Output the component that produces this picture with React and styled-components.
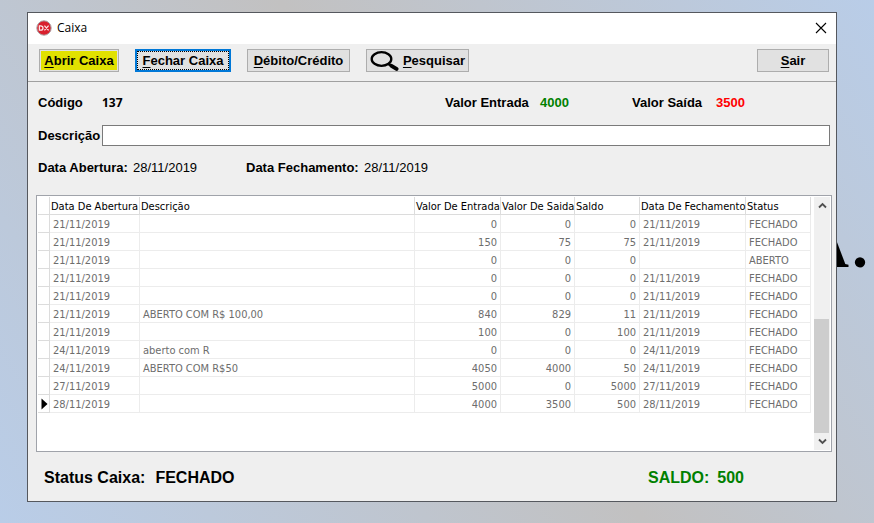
import React from "react";
import styled, { createGlobalStyle } from "styled-components";

const GlobalStyle = createGlobalStyle`
  * { box-sizing: border-box; }
  html, body, #root { min-height: 100vh; }
  body { margin: 0; font-family: "Liberation Sans", Arial, sans-serif; font-size: 13px; color: #000; }
`;

const Desktop = styled.div`
  position: relative;
  min-height: 100vh;
  padding: 12px 37px 21px 27px;
  overflow: hidden;
  background: linear-gradient(55deg, #b9cde8 0%, #c2c1c1 52%, #b9cde8 100%);
`;

const Wallpaper = styled.div`
  position: absolute;
  right: 6px;
  top: 210px;
  display: flex;
  gap: 3px;
  font: bold 64px/72px "Liberation Serif", "Times New Roman", serif;
`;

const Window = styled.main`
  position: relative;
  border: 1px solid #55585e;
  background: #efefef;
`;

const TitleBar = styled.header`
  display: flex;
  align-items: center;
  gap: 5px;
  height: 31px;
  padding: 0 9px 2px 8px;
  background: #fff;
`;

const Title = styled.h1`
  flex: 1;
  margin: 0;
  font: 12px/16px "Open Sans", "Noto Sans", sans-serif;
`;

const CloseButton = styled.button`
  display: flex;
  padding: 0;
  border: 0;
  background: none;
`;

const Toolbar = styled.nav`
  display: flex;
  align-items: center;
  gap: 16px;
  height: 38px;
  padding: 0 7px 5px 11px;
  border-bottom: 1px solid #a0a0a0;
`;

const ToolButton = styled.button`
  display: flex;
  align-items: center;
  justify-content: center;
  gap: 4px;
  width: ${(p) => p.$width}px;
  height: 23px;
  margin: 0;
  margin-left: ${(p) => (p.$push ? "auto" : "0")};
  padding: 2px 0 0;
  border: ${(p) => (p.$focused ? "2px solid #0078d7" : "1px solid #adadad")};
  outline: ${(p) => (p.$focused ? "1px dotted #000" : "none")};
  outline-offset: -3px;
  background: ${(p) => (p.$highlight ? "#e1e100" : "#e1e1e1")};
  box-shadow: ${(p) => (p.$highlight ? "inset 0 0 0 1px #e1e1e1" : "none")};
  color: #000;
  font: bold 13px/18px "Liberation Sans", Arial, sans-serif;
  white-space: nowrap;
`;

const AccessKey = styled.span`
  text-decoration: underline;
  text-underline-offset: 2px;
`;

const Form = styled.form`
  display: grid;
  gap: 12px;
  padding: 11px 6px 17px 10px;
`;

const FieldRow = styled.div`
  display: flex;
  align-items: center;
  min-height: 20px;
`;

const Label = styled.label`
  flex: none;
  width: ${(p) => (p.$width ? `${p.$width}px` : "auto")};
  font: bold 13px/18px "Liberation Sans", Arial, sans-serif;
`;

const Value = styled.output`
  width: ${(p) => (p.$width ? `${p.$width}px` : "auto")};
  color: ${(p) => p.$color || "#000"};
  font-size: 13px;
  font-weight: ${(p) => (p.$bold ? "bold" : "normal")};
  line-height: 18px;
`;

const Code = styled.output`
  flex: 1;
  font: bold 12px/18px "Noto Sans", sans-serif;
`;

const TextInput = styled.input`
  flex: 1;
  min-width: 0;
  height: 21px;
  padding: 0 4px;
  border: 1px solid #7a7a7a;
  background: #fff;
  font: 13px/18px "Liberation Sans", Arial, sans-serif;
`;

const GridPanel = styled.section`
  display: flex;
  gap: 3px;
  min-height: 257px;
  margin: 0 4px 0 8px;
  padding: 1px;
  border: 1px solid #a0a3aa;
  background: #fff;
`;

const GridArea = styled.div`
  flex: 1;
  min-width: 0;
`;

const Table = styled.table`
  width: 100%;
  table-layout: fixed;
  border-collapse: separate;
  border-spacing: 0;
  font: 11px/14px "DejaVu Sans Condensed", "DejaVu Sans", Tahoma, sans-serif;
`;

const Col = styled.col`
  width: ${(p) => (p.$width ? `${p.$width}px` : "auto")};
`;

const HeadCell = styled.th`
  height: 18px;
  padding: 2px 0 0 1px;
  border-right: 1px solid #dcdcdc;
  border-bottom: 1px solid #dcdcdc;
  font-weight: normal;
  text-align: left;
  white-space: nowrap;
`;

const Cell = styled.td`
  height: 18px;
  padding: 2px 3px 0;
  border-right: 1px solid #ececec;
  border-bottom: 1px solid #ececec;
  color: #6d6d6d;
  text-align: ${(p) => (p.$numeric ? "right" : "left")};
  white-space: nowrap;
`;

const MarkerCell = styled(Cell)`
  padding: 0 0 0 3px;
  border-color: #dcdcdc;
  line-height: 0;
`;

const ScrollBar = styled.div`
  display: flex;
  flex-direction: column;
  width: 16px;
  background: #f0f0f0;
`;

const ScrollButton = styled.button`
  display: flex;
  align-items: center;
  justify-content: center;
  height: 17px;
  padding: 0;
  border: 0;
  background: #f0f0f0;
`;

const ScrollTrack = styled.div`
  display: flex;
  flex: 1;
  flex-direction: column;
  justify-content: flex-end;
`;

const ScrollThumb = styled.div`
  width: 15px;
  height: 52%;
  background: #cdcdcd;
`;

const Footer = styled.footer`
  display: flex;
  align-items: center;
  justify-content: space-between;
  height: 49px;
  padding: 2px 92px 0 16px;
  font: bold 16px/20px "Liberation Sans", Arial, sans-serif;
`;

const Summary = styled.div`
  display: flex;
  gap: ${(p) => p.$gap}px;
  color: ${(p) => p.$color || "#000"};
`;

const COLUMNS = [
  { title: "Data De Abertura", width: 90 },
  { title: "Descrição" },
  { title: "Valor De Entrada", width: 86, numeric: true },
  { title: "Valor De Saida", width: 74, numeric: true },
  { title: "Saldo", width: 65, numeric: true },
  { title: "Data De Fechamento", width: 106 },
  { title: "Status", width: 65 },
];

const ROWS = [
  ["21/11/2019", "", "0", "0", "0", "21/11/2019", "FECHADO"],
  ["21/11/2019", "", "150", "75", "75", "21/11/2019", "FECHADO"],
  ["21/11/2019", "", "0", "0", "0", "", "ABERTO"],
  ["21/11/2019", "", "0", "0", "0", "21/11/2019", "FECHADO"],
  ["21/11/2019", "", "0", "0", "0", "21/11/2019", "FECHADO"],
  ["21/11/2019", "ABERTO COM R$ 100,00", "840", "829", "11", "21/11/2019", "FECHADO"],
  ["21/11/2019", "", "100", "0", "100", "21/11/2019", "FECHADO"],
  ["24/11/2019", "aberto com R", "0", "0", "0", "24/11/2019", "FECHADO"],
  ["24/11/2019", "ABERTO COM R$50", "4050", "4000", "50", "24/11/2019", "FECHADO"],
  ["27/11/2019", "", "5000", "0", "5000", "27/11/2019", "FECHADO"],
  ["28/11/2019", "", "4000", "3500", "500", "28/11/2019", "FECHADO"],
];

const AppIcon = () => (
  <svg width="16" height="16" viewBox="0 0 16 16" aria-hidden="true">
    <circle cx="8" cy="8" r="7.2" fill="#d9202e" stroke="#a9a3a5" strokeWidth="1" />
    <path d="M3.4 5.8v4.4h1.2c3.2 0 3.2-4.4 0-4.4zM8.4 5.6l4.2 4.8M12.6 5.6l-4.2 4.8" fill="none" stroke="#fbe3e5" strokeWidth="1.3" />
  </svg>
);

const CloseIcon = () => (
  <svg width="12" height="12" viewBox="0 0 12 12" aria-hidden="true">
    <path d="M1 1l10 10M11 1L1 11" stroke="#000" strokeWidth="1.1" />
  </svg>
);

const SearchIcon = () => (
  <svg width="29" height="21" viewBox="0 0 29 21" aria-hidden="true">
    <ellipse cx="11.5" cy="8" rx="9.8" ry="6.8" fill="none" stroke="#000" strokeWidth="2.3" />
    <path d="M18 12.8l3 1.6" stroke="#000" strokeWidth="2.6" />
    <path d="M21.5 14.9l5 3" stroke="#000" strokeWidth="4" strokeLinecap="round" />
  </svg>
);

const Chevron = ({ up }) => (
  <svg width="9" height="7" viewBox="0 0 9 7" aria-hidden="true">
    <path d={up ? "M1 5.5l3.5-3.5L8 5.5" : "M1 1.5L4.5 5 8 1.5"} fill="none" stroke="#505050" strokeWidth="1.8" />
  </svg>
);

const RowMarker = () => (
  <svg width="7" height="12" viewBox="0 0 7 12" role="img" aria-label="Registro atual">
    <path d="M0.5 0.5v11L6.5 6z" fill="#000" />
  </svg>
);

export default function App() {
  return (
    <Desktop>
      <GlobalStyle />
      <Wallpaper aria-hidden="true"><span>A</span><span>.</span></Wallpaper>
      <Window>
        <TitleBar>
          <AppIcon />
          <Title>Caixa</Title>
          <CloseButton type="button" aria-label="Fechar"><CloseIcon /></CloseButton>
        </TitleBar>

        <Toolbar>
          <ToolButton type="button" $width={80} $highlight><span><AccessKey>A</AccessKey>brir Caixa</span></ToolButton>
          <ToolButton type="button" $width={96} $focused><span><AccessKey>F</AccessKey>echar Caixa</span></ToolButton>
          <ToolButton type="button" $width={103}><span><AccessKey>D</AccessKey>ébito/Crédito</span></ToolButton>
          <ToolButton type="button" $width={103}><SearchIcon /><span><AccessKey>P</AccessKey>esquisar</span></ToolButton>
          <ToolButton type="button" $width={72} $push><span><AccessKey>S</AccessKey>air</span></ToolButton>
        </Toolbar>

        <Form onSubmit={(e) => e.preventDefault()}>
          <FieldRow>
            <Label htmlFor="codigo" $width={64}>Código</Label>
            <Code id="codigo">137</Code>
            <Label htmlFor="entrada" $width={95}>Valor Entrada</Label>
            <Value id="entrada" $width={92} $bold $color="#008000">4000</Value>
            <Label htmlFor="saida" $width={84}>Valor Saída</Label>
            <Value id="saida" $width={114} $bold $color="#ff0000">3500</Value>
          </FieldRow>
          <FieldRow>
            <Label htmlFor="descricao" $width={64}>Descrição</Label>
            <TextInput id="descricao" type="text" />
          </FieldRow>
          <FieldRow>
            <Label htmlFor="abertura" $width={95}>Data Abertura:</Label>
            <Value id="abertura" $width={113}>28/11/2019</Value>
            <Label htmlFor="fechamento" $width={118}>Data Fechamento:</Label>
            <Value id="fechamento">28/11/2019</Value>
          </FieldRow>
        </Form>

        <GridPanel>
          <GridArea>
            <Table>
              <colgroup>
                <Col $width={12} />
                {COLUMNS.map((c) => <Col key={c.title} $width={c.width} />)}
              </colgroup>
              <thead>
                <tr>
                  <HeadCell />
                  {COLUMNS.map((c) => <HeadCell key={c.title} scope="col">{c.title}</HeadCell>)}
                </tr>
              </thead>
              <tbody>
                {ROWS.map((row, r) => (
                  <tr key={r}>
                    <MarkerCell>{r === ROWS.length - 1 && <RowMarker />}</MarkerCell>
                    {row.map((text, i) => (
                      <Cell key={COLUMNS[i].title} $numeric={COLUMNS[i].numeric}>{text}</Cell>
                    ))}
                  </tr>
                ))}
              </tbody>
            </Table>
          </GridArea>
          <ScrollBar>
            <ScrollButton type="button" aria-label="Rolar para cima"><Chevron up /></ScrollButton>
            <ScrollTrack><ScrollThumb /></ScrollTrack>
            <ScrollButton type="button" aria-label="Rolar para baixo"><Chevron /></ScrollButton>
          </ScrollBar>
        </GridPanel>

        <Footer>
          <Summary $gap={10}><span>Status Caixa:</span><span>FECHADO</span></Summary>
          <Summary $gap={8} $color="#008000"><span>SALDO:</span><span>500</span></Summary>
        </Footer>
      </Window>
    </Desktop>
  );
}
